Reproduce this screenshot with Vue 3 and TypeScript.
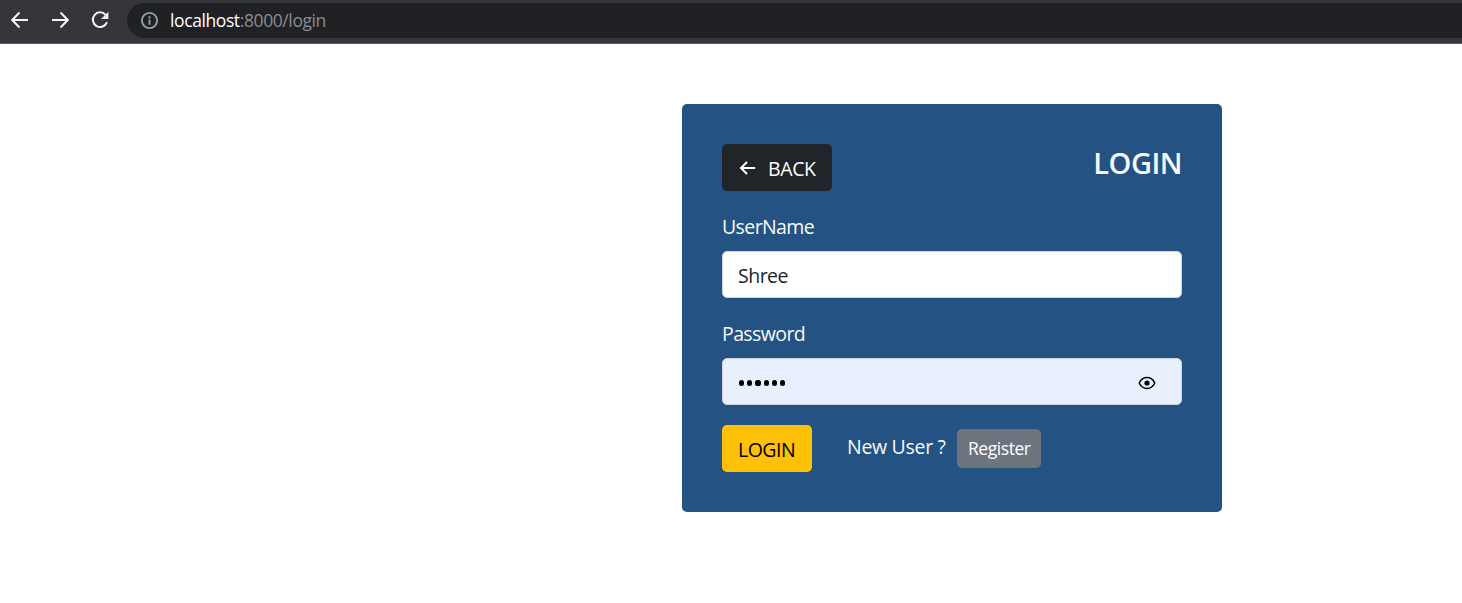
<script setup lang="ts">
import { ref } from 'vue'

const username = ref<string>('Shree')
const password = ref<string>('secret')
const submit = (): void => {}
</script>

<template>
  <div class="page">
    <header class="toolbar">
      <svg class="nav" viewBox="0 0 20 20"><path d="M18 10H2.5M9.5 2.5 2.2 10l7.3 7.5" /></svg>
      <svg class="nav" viewBox="0 0 20 20"><path d="M2 10h15.5M10.5 2.5l7.3 7.5-7.3 7.5" /></svg>
      <svg class="nav" viewBox="0 0 20 20">
        <path d="M15.6 4.8A7.3 7.3 0 1 0 17 12.2" />
        <path class="solid" d="M18.4 1.7v7.4H11z" />
      </svg>
      <div class="address">
        <svg class="info" viewBox="0 0 18 18">
          <circle cx="9" cy="9" r="7.2" />
          <path d="M9 8v5M9 5v2" />
        </svg>
        <span class="url"><span class="host">localhost</span>:8000/login</span>
      </div>
    </header>

    <main>
      <form class="card" @submit.prevent="submit">
        <div class="top">
          <button type="button" class="btn back">
            <svg viewBox="0 0 18 16"><path d="M16.2 8H2.2M8 2 2 8l6 6" /></svg>
            <span>BACK</span>
          </button>
          <h1>LOGIN</h1>
        </div>
        <label class="user-label" for="user">UserName</label>
        <div class="field"><input id="user" v-model="username" type="text" /></div>
        <label class="pass-label" for="pass">Password</label>
        <div class="field filled">
          <span id="pass" class="dots"><i v-for="n in password.length" :key="n"></i></span>
          <svg class="eye" viewBox="0 0 18 14">
            <path d="M1.2 7C3 3.2 5.7 1.6 9 1.6S15 3.2 16.8 7C15 10.8 12.3 12.4 9 12.4S3 10.8 1.2 7z" />
            <circle cx="9" cy="7" r="2.6" />
          </svg>
        </div>
        <div class="actions">
          <button type="submit" class="btn login"><span>LOGIN</span></button>
          <span class="new-user">New User ?</span>
          <button type="button" class="btn register"><span>Register</span></button>
        </div>
      </form>
    </main>
  </div>
</template>

<style>
body { margin: 0; background: #fff; }
</style>

<style scoped>
* { box-sizing: border-box; }
.page {
  height: 603px;
  overflow: hidden;
  font-family: "Segoe UI", "Open Sans", "Noto Sans", sans-serif;
  font-size: 19.5px;
  color: #f8f9fa;
}
.toolbar {
  display: flex;
  height: 44px;
  padding: 3px 0 5px 10px;
  background: #35363a;
  border-bottom: 1px solid #5b595d;
}
.nav {
  flex: none;
  width: 20px;
  height: 20px;
  margin: 7px 20px 0 0;
  fill: none;
  stroke: #f1f3f4;
  stroke-width: 2;
}
.nav .solid { fill: #f1f3f4; stroke: none; }
.nav:nth-child(3) { margin-right: 17px; }
.address {
  display: flex;
  align-items: center;
  flex: 1;
  height: 35px;
  padding-left: 13px;
  border-radius: 18px 0 0 18px;
  background: #202124;
}
.info { width: 19px; height: 19px; fill: none; stroke: #9aa0a6; stroke-width: 1.8; }
.url {
  margin: -2px 0 0 11px;
  font-size: 17.5px;
  letter-spacing: -0.4px;
  line-height: 34px;
  color: #8b8d90;
  white-space: nowrap;
}
.host { color: #fff; }
main { padding-top: 60px; }
.card {
  width: 540px;
  height: 408px;
  margin-left: 682px;
  padding: 40px;
  border-radius: 5px;
  background: #245282;
}
.top { display: flex; justify-content: space-between; height: 47px; }
.btn {
  display: flex;
  align-items: center;
  padding: 0;
  border: 0;
  border-radius: 5px;
  font-family: inherit;
  font-size: 19.5px;
  white-space: nowrap;
}
.back { width: 110px; height: 47px; padding-left: 17px; background: #212529; color: #fff; }
.back svg { width: 18px; height: 16px; fill: none; stroke: #fff; stroke-width: 2; }
.back span { margin: 1px 0 0 11px; letter-spacing: -0.4px; }
h1 {
  margin: 0;
  font-size: 29px;
  font-weight: 600;
  line-height: 38px;
  letter-spacing: -0.5px;
}
label { display: block; height: 30px; line-height: 30px; letter-spacing: -0.6px; }
.user-label { margin: 21px 0 9px; }
.pass-label { margin: 21px 0 9px; }
.field {
  display: flex;
  align-items: center;
  height: 47px;
  padding: 0 15px;
  border: 1px solid #ced4da;
  border-radius: 5px;
  background: #fff;
}
.field input {
  width: 100%;
  height: 30px;
  margin-top: 1px;
  padding: 0;
  border: 0;
  outline: 0;
  background: transparent;
  color: #212529;
  font: inherit;
  letter-spacing: -0.5px;
}
.filled { justify-content: space-between; background: #e8f0fe; }
.dots { display: flex; gap: 3px; margin: 3px 0 0 1px; }
.dots i { width: 5.2px; height: 5.2px; border-radius: 50%; background: #000; }
.eye { width: 18px; height: 14px; margin: 3px 10px 0 0; fill: none; stroke: #000; stroke-width: 1.5; }
.eye circle { fill: #000; stroke: none; }
.actions { display: flex; height: 47px; margin-top: 20px; }
.login { width: 90px; padding-left: 16px; background: #ffc107; color: #000; }
.login span { margin-top: 1px; letter-spacing: -0.5px; }
.new-user {
  width: 110px;
  margin-left: 35px;
  line-height: 43px;
  letter-spacing: -0.3px;
  white-space: nowrap;
}
.register {
  width: 84px;
  height: 39px;
  margin-top: 4px;
  padding-left: 11px;
  background: #6c757d;
  color: #fff;
  font-size: 17.5px;
}
.register span { margin-top: -2px; letter-spacing: -0.45px; }
</style>
